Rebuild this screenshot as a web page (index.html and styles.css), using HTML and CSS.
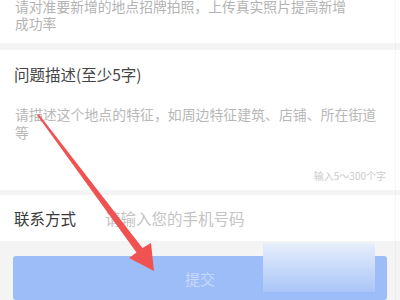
FILE: index.html
```html
<!DOCTYPE html>
<html lang="zh">
<head>
<meta charset="utf-8">
<link rel="stylesheet" href="styles.css">
</head>
<body>
<div class="page">
  <section class="card tip">
    <p class="tip-text">请对准要新增的地点招牌拍照，上传真实照片提高新增<br>成功率</p>
  </section>
  <section class="card desc">
    <h2 class="title">问题描述(至少5字)</h2>
    <p class="placeholder">请描述这个地点的特征，如周边特征建筑、店铺、所在街道<br>等</p>
    <div class="counter">输入5～300个字</div>
  </section>
  <section class="card contact">
    <span class="label">联系方式</span>
    <span class="contact-ph">请输入您的手机号码</span>
  </section>
  <div class="actions">
    <button class="submit">提交</button>
  </div>
  <div class="watermark"></div>
  <div class="edge"></div>
  <svg class="arrow" width="400" height="300" viewBox="0 0 400 300">
    <polygon points="37,115 39,114.5 142.5,248 151,243 154,271 129,258 136.5,252.5" fill="#f05252"/>
  </svg>
</div>
</body>
</html>
```
FILE: styles.css
```css
html, body {
  margin: 0;
  padding: 0;
}
body {
  background: #f4f4f4;
  font-family: "Noto Sans CJK SC", "Noto Sans", sans-serif;
  width: 400px;
  height: 300px;
  overflow: hidden;
}
.page {
  position: relative;
  width: 400px;
  height: 300px;
  display: flex;
  flex-direction: column;
}
.card {
  background: #fff;
}
.tip {
  height: 43px;
  padding: 0 15px;
  box-sizing: border-box;
  overflow: hidden;
}
.tip-text {
  margin: -2px 0 0;
  font-size: 13.8px;
  line-height: 17px;
  color: #b3b3b3;
}
.desc {
  margin-top: 7px;
  height: 142px;
  box-sizing: border-box;
  padding: 13px 14px 0 15px;
  display: flex;
  flex-direction: column;
}
.title {
  margin: 0;
  font-size: 15.5px;
  font-weight: normal;
  line-height: 22px;
  color: #444;
  margin-left: -1px;
}
.placeholder {
  margin: 20px 0 0;
  font-size: 13.9px;
  line-height: 18px;
  color: #b8b8b8;
}
.counter {
  margin-top: 28px;
  align-self: flex-end;
  font-size: 10px;
  line-height: 14px;
  color: #cbcbcb;
}
.contact {
  margin-top: 5px;
  height: 46px;
  display: flex;
  align-items: center;
  padding-left: 14px;
}
.label {
  width: 91px;
  font-size: 15.5px;
  color: #3a3a3a;
}
.contact-ph {
  font-size: 15.5px;
  color: #c4c4c4;
}
.actions {
  padding: 15px 13px 0;
}
.submit {
  display: block;
  width: 100%;
  height: 44px;
  border: none;
  border-radius: 3px;
  background: #9dbdf8;
  color: #c9d9fb;
  font-family: inherit;
  font-size: 15px;
}
.watermark {
  position: absolute;
  left: 263px;
  top: 243px;
  width: 112px;
  height: 49px;
  background: linear-gradient(#e7eefb, #a9c5f8);
}
.edge {
  position: absolute;
  left: 395px;
  top: 0;
  width: 1px;
  height: 300px;
  background: rgba(0,0,0,0.03);
}
.arrow {
  position: absolute;
  left: 0;
  top: 0;
}
```
